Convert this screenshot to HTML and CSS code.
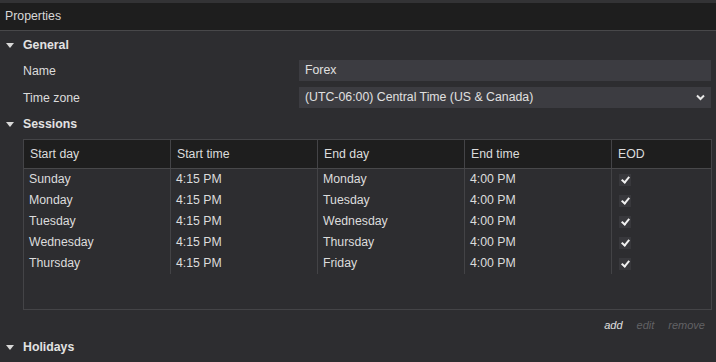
FILE: index.html
```html
<!DOCTYPE html>
<html lang="en">
<head>
    <meta charset="UTF-8">
    <title>Properties</title>
    <link rel="stylesheet" href="styles.css">
</head>
<body>
    <div class="panel">
        <div class="titlebar">Properties</div>

        <div class="section-head general-head"><span class="caret"></span>General</div>
        <div class="fields">
            <div class="field">
                <label>Name</label>
                <div class="input">Forex</div>
            </div>
            <div class="field">
                <label>Time zone</label>
                <div class="input select">
                    (UTC-06:00) Central Time (US &amp; Canada)
                    <svg class="chevron" width="9" height="7" viewBox="0 0 9 7"><path d="M1 1.5 L4.5 5 L8 1.5" fill="none" stroke="#e8e8e8" stroke-width="2"/></svg>
                </div>
            </div>
        </div>

        <div class="section-head sessions-head"><span class="caret"></span>Sessions</div>
        <div class="grid">
            <div class="grid-row head">
                <div>Start day</div><div>Start time</div><div>End day</div><div>End time</div><div>EOD</div>
            </div>
            <div class="grid-row">
                <div>Sunday</div><div>4:15 PM</div><div>Monday</div><div>4:00 PM</div><div><span class="check"></span></div>
            </div>
            <div class="grid-row">
                <div>Monday</div><div>4:15 PM</div><div>Tuesday</div><div>4:00 PM</div><div><span class="check"></span></div>
            </div>
            <div class="grid-row">
                <div>Tuesday</div><div>4:15 PM</div><div>Wednesday</div><div>4:00 PM</div><div><span class="check"></span></div>
            </div>
            <div class="grid-row">
                <div>Wednesday</div><div>4:15 PM</div><div>Thursday</div><div>4:00 PM</div><div><span class="check"></span></div>
            </div>
            <div class="grid-row">
                <div>Thursday</div><div>4:15 PM</div><div>Friday</div><div>4:00 PM</div><div><span class="check"></span></div>
            </div>
        </div>
        <div class="actions">
            <span class="active">add</span>
            <span>edit</span>
            <span>remove</span>
        </div>

        <div class="section-head holidays-head"><span class="caret"></span>Holidays</div>
    </div>
</body>
</html>
```

FILE: styles.css
```css
body {
    margin: 0;
    padding: 0;
    background-color: #2d2d30;
    font-family: "Liberation Sans", Arial, sans-serif;
    font-size: 12.3px;
    color: #dcdcdc;
}
.panel {
    width: 716px;
    height: 362px;
    overflow: hidden;
    border-top: 3px solid #333335;
    box-sizing: border-box;
}
.titlebar {
    height: 27px;
    line-height: 27px;
    padding-left: 5px;
    background-color: #1e1e1e;
    border-bottom: 1px solid #48484a;
    color: #d8d8d8;
}
.section-head {
    display: flex;
    align-items: center;
    height: 22px;
    margin-top: 2px;
    font-weight: bold;
    color: #e2e2e2;
}
.general-head {
    margin-top: 3px;
}
.caret {
    width: 0;
    height: 0;
    margin: 0 9px 0 6px;
    border-left: 4px solid transparent;
    border-right: 4px solid transparent;
    border-top: 5px solid #d8d8d8;
}
.fields {
    padding: 4px 5px 0 23px;
    display: flex;
    flex-direction: column;
    gap: 6px;
}
.field {
    display: flex;
    align-items: center;
}
.field label {
    width: 276px;
}
.input {
    flex: 1;
    height: 21px;
    line-height: 21px;
    padding-left: 6px;
    background-color: #3c3c41;
    color: #e0e0e0;
    display: flex;
    align-items: center;
}
.select {
    padding-right: 6px;
    justify-content: space-between;
}
.sessions-head {
    margin-top: 5px;
}
.grid {
    margin: 4px 4px 0 23px;
    height: 171px;
    border: 1px solid #444447;
    box-sizing: border-box;
}
.grid-row {
    display: grid;
    grid-template-columns: 147px 147px 147px 147px 1fr;
    height: 21px;
    line-height: 21px;
}
.grid-row > div {
    border-right: 1px solid #434346;
    padding-left: 5px;
    display: flex;
    align-items: center;
}
.grid-row > div:last-child {
    border-right: none;
    padding-left: 7px;
}
.grid-row.head {
    height: 28px;
    background-color: #1e1e1e;
    border-bottom: 1px solid #48484a;
}
.grid-row.head > div {
    padding-left: 6px;
    border-right-color: #444447;
}
.check {
    width: 12px;
    height: 12px;
    background-color: #38383c;
    position: relative;
}
.check::after {
    content: "";
    position: absolute;
    left: 4px;
    top: 1px;
    width: 3px;
    height: 6px;
    border-right: 2px solid #f0f0f0;
    border-bottom: 2px solid #f0f0f0;
    transform: rotate(40deg);
}
.actions {
    display: flex;
    justify-content: flex-end;
    gap: 14px;
    height: 18px;
    line-height: 18px;
    margin-top: 6px;
    padding-right: 11px;
    font-size: 11px;
    font-style: italic;
    color: #626265;
}
.actions .active {
    color: #e0e0e0;
}
.holidays-head {
    margin-top: 2px;
}
```
